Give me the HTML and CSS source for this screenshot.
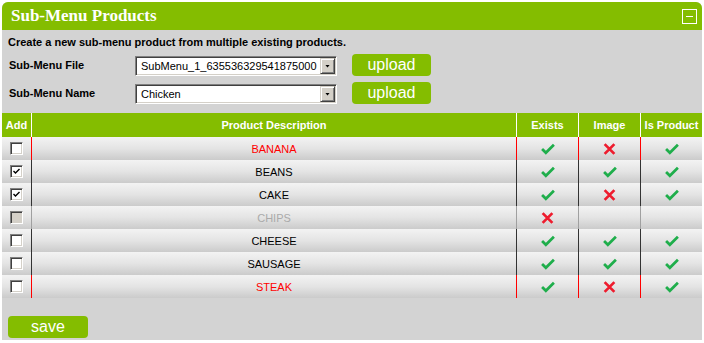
FILE: index.html
```html
<!DOCTYPE html>
<html>
<head>
<meta charset="utf-8">
<link rel="stylesheet" href="styles.css">
</head>
<body>
<div class="panel">
  <div class="titlebar">
    <h1 class="title">Sub-Menu Products</h1>
    <span class="collapse"></span>
  </div>
  <div class="form">
    <p class="intro">Create a new sub-menu product from multiple existing products.</p>
    <div class="field">
      <label class="label">Sub-Menu File</label>
      <div class="select"><span class="val">SubMenu_1_635536329541875000</span><span class="arrow"><i class="tri"></i></span></div>
      <button class="btn">upload</button>
    </div>
    <div class="field">
      <label class="label">Sub-Menu Name</label>
      <div class="select"><span class="val">Chicken</span><span class="arrow"><i class="tri"></i></span></div>
      <button class="btn">upload</button>
    </div>
  </div>

  <div class="grid">
    <div class="row head">
      <div class="cell">Add</div>
      <div class="cell">Product Description</div>
      <div class="cell">Exists</div>
      <div class="cell">Image</div>
      <div class="cell">Is Product</div>
    </div>

    <div class="row err">
      <div class="cell"><span class="cb"></span></div>
      <div class="cell name">BANANA</div>
      <div class="cell"><svg class="ok" viewBox="0 0 13 11"><polyline points="1,5.5 4.5,9 12,1.5"/></svg></div>
      <div class="cell"><svg class="no" viewBox="0 0 12 11"><path d="M1.5 1 L10.5 10 M10.5 1 L1.5 10"/></svg></div>
      <div class="cell"><svg class="ok" viewBox="0 0 13 11"><polyline points="1,5.5 4.5,9 12,1.5"/></svg></div>
    </div>

    <div class="row">
      <div class="cell"><span class="cb on"><svg viewBox="0 0 7 7"><polyline points="0.5,3 2.5,5 6.5,1"/></svg></span></div>
      <div class="cell name">BEANS</div>
      <div class="cell"><svg class="ok" viewBox="0 0 13 11"><polyline points="1,5.5 4.5,9 12,1.5"/></svg></div>
      <div class="cell"><svg class="ok" viewBox="0 0 13 11"><polyline points="1,5.5 4.5,9 12,1.5"/></svg></div>
      <div class="cell"><svg class="ok" viewBox="0 0 13 11"><polyline points="1,5.5 4.5,9 12,1.5"/></svg></div>
    </div>

    <div class="row">
      <div class="cell"><span class="cb on"><svg viewBox="0 0 7 7"><polyline points="0.5,3 2.5,5 6.5,1"/></svg></span></div>
      <div class="cell name">CAKE</div>
      <div class="cell"><svg class="ok" viewBox="0 0 13 11"><polyline points="1,5.5 4.5,9 12,1.5"/></svg></div>
      <div class="cell"><svg class="no" viewBox="0 0 12 11"><path d="M1.5 1 L10.5 10 M10.5 1 L1.5 10"/></svg></div>
      <div class="cell"><svg class="ok" viewBox="0 0 13 11"><polyline points="1,5.5 4.5,9 12,1.5"/></svg></div>
    </div>

    <div class="row dis">
      <div class="cell"><span class="cb off"></span></div>
      <div class="cell name">CHIPS</div>
      <div class="cell"><svg class="no" viewBox="0 0 12 11"><path d="M1.5 1 L10.5 10 M10.5 1 L1.5 10"/></svg></div>
      <div class="cell"></div>
      <div class="cell"></div>
    </div>

    <div class="row">
      <div class="cell"><span class="cb"></span></div>
      <div class="cell name">CHEESE</div>
      <div class="cell"><svg class="ok" viewBox="0 0 13 11"><polyline points="1,5.5 4.5,9 12,1.5"/></svg></div>
      <div class="cell"><svg class="ok" viewBox="0 0 13 11"><polyline points="1,5.5 4.5,9 12,1.5"/></svg></div>
      <div class="cell"><svg class="ok" viewBox="0 0 13 11"><polyline points="1,5.5 4.5,9 12,1.5"/></svg></div>
    </div>

    <div class="row">
      <div class="cell"><span class="cb"></span></div>
      <div class="cell name">SAUSAGE</div>
      <div class="cell"><svg class="ok" viewBox="0 0 13 11"><polyline points="1,5.5 4.5,9 12,1.5"/></svg></div>
      <div class="cell"><svg class="ok" viewBox="0 0 13 11"><polyline points="1,5.5 4.5,9 12,1.5"/></svg></div>
      <div class="cell"><svg class="ok" viewBox="0 0 13 11"><polyline points="1,5.5 4.5,9 12,1.5"/></svg></div>
    </div>

    <div class="row err">
      <div class="cell"><span class="cb"></span></div>
      <div class="cell name">STEAK</div>
      <div class="cell"><svg class="ok" viewBox="0 0 13 11"><polyline points="1,5.5 4.5,9 12,1.5"/></svg></div>
      <div class="cell"><svg class="no" viewBox="0 0 12 11"><path d="M1.5 1 L10.5 10 M10.5 1 L1.5 10"/></svg></div>
      <div class="cell"><svg class="ok" viewBox="0 0 13 11"><polyline points="1,5.5 4.5,9 12,1.5"/></svg></div>
    </div>
  </div>

  <div class="footer">
    <button class="btn save">save</button>
  </div>
</div>
</body>
</html>
```

FILE: styles.css
```css
html, body {
  margin: 0;
  padding: 0;
  background: #ffffff;
}
body {
  font-family: "Liberation Sans", Arial, sans-serif;
  font-size: 11px;
  color: #000;
}
.panel {
  margin: 2px;
  width: 700px;
  height: 338px;
  background: #d3d3d3;
  border-radius: 6px 6px 0 0;
  overflow: hidden;
  display: flex;
  flex-direction: column;
}
.titlebar {
  height: 28px;
  flex: none;
  background: #84bd00;
  display: flex;
  align-items: center;
  justify-content: space-between;
  padding: 0 5px 0 9px;
}
.title {
  margin: 0;
  font: bold 17px "Liberation Serif", "Times New Roman", serif;
  color: #fff;
}
.collapse {
  width: 13px;
  height: 13px;
  margin-top: 1px;
  border: 1px solid #fff;
  display: flex;
  align-items: center;
  justify-content: center;
}
.collapse::before {
  content: "";
  width: 7px;
  height: 1px;
  background: #fff;
}
.form {
  padding: 6px 6px 0 6px;
}
.intro {
  margin: 0;
  font-weight: bold;
  line-height: 13px;
}
.field {
  display: flex;
  align-items: center;
  height: 22px;
  margin-top: 5px;
}
.field + .field {
  margin-top: 6px;
}
.label {
  width: 126px;
  padding-left: 1px;
  font-weight: bold;
}
.select {
  box-sizing: border-box;
  width: 202px;
  height: 20px;
  margin-top: 1px;
  background: #fff;
  border: 1px solid;
  border-color: #808080 #fff #fff #808080;
  box-shadow: inset 1px 1px #404040, inset -1px -1px #d4d0c8;
  display: flex;
  align-items: center;
  padding: 1px;
}
.val {
  flex: 1;
  overflow: hidden;
  white-space: nowrap;
  padding-left: 4px;
  font-size: 11px;
  color: #000;
}
.arrow {
  box-sizing: border-box;
  width: 15px;
  height: 16px;
  flex: none;
  background: #d4d0c8;
  border: 1px solid;
  border-color: #d4d0c8 #404040 #404040 #d4d0c8;
  box-shadow: inset 1px 1px #fff, inset -1px -1px #808080;
  display: flex;
  align-items: center;
  justify-content: center;
}
.tri {
  display: block;
  width: 5px;
  height: 3px;
  margin-top: 1px;
  background: #000;
  clip-path: polygon(0 0, 100% 0, 50% 100%);
}
.btn {
  box-sizing: border-box;
  width: 79px;
  height: 22px;
  margin-left: 15px;
  padding: 0;
  border: none;
  border-radius: 4px;
  background: #84bd00;
  color: #fff;
  font: 16px "Liberation Sans", Arial, sans-serif;
  line-height: 22px;
}
.grid {
  margin-top: 9px;
}
.row {
  display: grid;
  grid-template-columns: 29px 485px 62px 62px 62px;
  height: 23px;
  background: linear-gradient(to bottom, #f3f3f3 0%, #e4e4e4 50%, #cbcbcb 100%);
}
.row.head {
  height: 24px;
  background: #84bd00;
  color: #fff;
  font-weight: bold;
}
.cell {
  box-sizing: border-box;
  display: flex;
  align-items: center;
  justify-content: center;
  border-left: 1px solid #333;
}
.cell:first-child {
  border-left: none;
}
.head .cell {
  border-left-color: #fff;
}
.head .cell:first-child {
  border-left: none;
}
.err .cell {
  border-left-color: #ff0000;
}
.err .cell.name {
  color: #ff0000;
}
.dis .cell {
  border-left-color: #a0a0a0;
}
.dis .cell.name {
  color: #aaaaaa;
}
.cb {
  box-sizing: border-box;
  width: 13px;
  height: 13px;
  background: #fff;
  border: 1px solid;
  border-color: #808080 #fff #fff #808080;
  box-shadow: inset 1px 1px #404040, inset -1px -1px #d4d0c8;
  display: flex;
  align-items: center;
  justify-content: center;
}
.cb.off {
  background: #d4d0c8;
}
.cb svg {
  width: 7px;
  height: 7px;
  fill: none;
  stroke: #000;
  stroke-width: 1.4;
}
.ok {
  width: 14px;
  height: 12px;
  fill: none;
  stroke: #1fae4b;
  stroke-width: 2.5;
}
.no {
  width: 13px;
  height: 12px;
  fill: none;
  stroke: #ee1c2e;
  stroke-width: 2.5;
}
.footer {
  padding: 18px 6px 0 6px;
}
.save {
  width: 80px;
  margin-left: 0;
}
```
